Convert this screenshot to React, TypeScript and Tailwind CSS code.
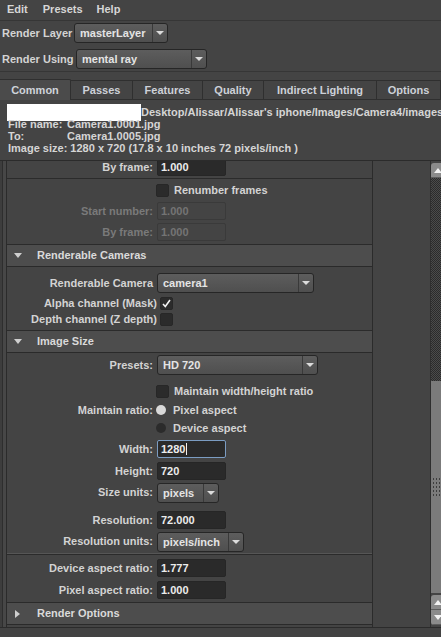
import React, { ReactNode } from 'react';

function DownTri() {
  return <span className="h-0 w-0 border-x-[4px] border-t-[4px] border-x-transparent border-t-[#dcdcdc]" />;
}

function Dropdown({ value, className = '' }: { value: string; className?: string }) {
  return (
    <div
      className={`flex h-[20px] shrink-0 rounded-[3px] border border-[#262626] bg-gradient-to-b from-[#5d5d5d] to-[#4f4f4f] ${className}`}
    >
      <div className="min-w-0 flex-1 overflow-hidden whitespace-nowrap pl-[5px] leading-[18px] text-[#e4e4e4]">
        {value}
      </div>
      <div className="flex w-[15px] shrink-0 items-center justify-center border-l border-[#393939]">
        <DownTri />
      </div>
    </div>
  );
}

type FieldKind = 'normal' | 'disabled' | 'focus';

function Field({ value, kind = 'normal' }: { value: string; kind?: FieldKind }) {
  const look =
    kind === 'disabled'
      ? 'border-[#3a3a3a] bg-[#444444] text-[#747474]'
      : kind === 'focus'
        ? 'border-[#7b9cc2] bg-[#2a2a2a] text-[#ececec]'
        : 'border-[#262626] bg-[#2a2a2a] text-[#ececec]';
  return (
    <div className={`flex h-[18px] w-[69px] shrink-0 items-center rounded-[2px] border pl-[3px] ${look}`}>
      {value}
      {kind === 'focus' && <span className="ml-px h-[12px] w-px bg-[#f0f0f0]" />}
    </div>
  );
}

function Checkbox({ checked = false }: { checked?: boolean }) {
  return (
    <span className="flex h-[13px] w-[13px] shrink-0 items-center justify-center rounded-[2px] border border-[#272727] bg-[#2b2b2b]">
      {checked && (
        <svg width="11" height="11" viewBox="0 0 11 11">
          <path d="M2 6 L4.3 8.5 L9 2" fill="none" stroke="#f2f2f2" strokeWidth="1.6" />
        </svg>
      )}
    </span>
  );
}

function Radio({ on = false }: { on?: boolean }) {
  return (
    <span
      className={`h-[10px] w-[10px] shrink-0 rounded-full ${on ? 'bg-[#d9d9d9]' : 'bg-[#2b2b2b]'}`}
    />
  );
}

function Row({
  label,
  dim = false,
  className = '',
  children,
}: {
  label: string;
  dim?: boolean;
  className?: string;
  children: ReactNode;
}) {
  return (
    <div className={`flex items-center ${className}`}>
      <span className={`w-[146px] shrink-0 whitespace-nowrap text-right ${dim ? 'text-[#7a7a7a]' : ''}`}>
        {label}
      </span>
      <div className="ml-[4px] flex items-center">{children}</div>
    </div>
  );
}

function Header({ title, open = true }: { title: string; open?: boolean }) {
  return (
    <div className="flex h-[22px] shrink-0 items-center border-b border-[#2a2a2a] bg-[#4d4d4d] text-[#dadada]">
      {open ? (
        <span className="ml-[7px] h-0 w-0 border-x-[4px] border-t-[5px] border-x-transparent border-t-[#cfcfcf]" />
      ) : (
        <span className="ml-[8px] h-0 w-0 border-y-[4px] border-l-[5px] border-y-transparent border-l-[#cfcfcf]" />
      )}
      <span className={open ? 'ml-[15px]' : 'ml-[17px]'}>{title}</span>
    </div>
  );
}

function ScrollButton({ up }: { up: boolean }) {
  return (
    <div className="flex h-[15px] shrink-0 items-center border-b border-[#5c5c5c] bg-[#8b8b8b] pl-[3px]">
      {up ? (
        <span className="h-0 w-0 border-x-[4px] border-b-[5px] border-x-transparent border-b-[#f2f2f2]" />
      ) : (
        <span className="h-0 w-0 border-x-[4px] border-t-[5px] border-x-transparent border-t-[#f2f2f2]" />
      )}
    </div>
  );
}

function Scrollbar() {
  return (
    <div className="flex w-[11px] shrink-0 flex-col border-l border-[#2e2e2e] pt-[2px]">
      <div className="rounded-tl-[3px] overflow-hidden">
        <ScrollButton up />
      </div>
      <div className="h-[203px] shrink-0 bg-[image:repeating-conic-gradient(#2b2b2b_0_25%,#4b4b4b_0_50%)] bg-[length:2px_2px]" />
      <div className="flex h-[212px] shrink-0 items-center bg-[#7b7b7b] pl-[2px]">
        <div className="grid grid-cols-3 gap-x-[2px] gap-y-[2px]">
          {Array.from({ length: 15 }).map((_, i) => (
            <span key={i} className="h-[2px] w-px bg-[#3d3d3d]" />
          ))}
        </div>
      </div>
      <div className="mt-[2px] overflow-hidden rounded-tl-[3px]">
        <ScrollButton up />
      </div>
      <div className="overflow-hidden rounded-bl-[3px]">
        <ScrollButton up={false} />
      </div>
    </div>
  );
}

const tabs = [
  { name: 'Common', w: 'w-[71px]' },
  { name: 'Passes', w: 'w-[62px]' },
  { name: 'Features', w: 'w-[70px]' },
  { name: 'Quality', w: 'w-[61px]' },
  { name: 'Indirect Lighting', w: 'w-[113px]' },
  { name: 'Options', w: 'w-[64px]' },
];

export default function App() {
  return (
    <div className="flex h-[637px] w-[441px] flex-col overflow-hidden whitespace-nowrap bg-[#444444] font-['Liberation_Sans',Arial,sans-serif] text-[11px] font-bold leading-none text-[#d3d3d3]">
      {/* Menu bar */}
      <div className="flex h-[21px] shrink-0 items-center border-b border-[#363636] pb-[2px] text-[#d6d6d6]">
        <span className="ml-[7px]">Edit</span>
        <span className="ml-[15px]">Presets</span>
        <span className="ml-[14px]">Help</span>
      </div>

      {/* Render layer / renderer */}
      <div className="flex h-[51px] shrink-0 flex-col border-b border-[#363636] pt-[2px]">
        <div className="flex h-[20px] items-center">
          <span className="w-[74px] shrink-0 pl-[2px]">Render Layer</span>
          <Dropdown value="masterLayer" className="w-[94px]" />
        </div>
        <div className="mt-[6px] flex h-[20px] items-center">
          <span className="w-[76px] shrink-0 pl-[2px]">Render Using</span>
          <Dropdown value="mental ray" className="w-[131px]" />
        </div>
      </div>

      {/* Tabs */}
      <div className="flex h-[28px] shrink-0 items-end">
        {tabs.map((t, i) =>
          i === 0 ? (
            <div
              key={t.name}
              className={`flex h-[21px] shrink-0 items-center justify-center rounded-tr-[2px] border-r border-t border-[#2f2f2f] bg-[#4b4b4b] text-[#cfd3da] ${t.w}`}
            >
              {t.name}
            </div>
          ) : (
            <div
              key={t.name}
              className={`flex h-[20px] shrink-0 items-center justify-center border-b border-r border-t border-[#2f2f2f] text-[#cdd1d8] ${t.w}`}
            >
              {t.name}
            </div>
          ),
        )}
      </div>

      {/* File info */}
      <div className="flex h-[60px] shrink-0 flex-col overflow-hidden pl-[7px] pt-[6px] text-[#d5d5d5]">
        <div className="flex h-[12px] items-center">
          <span className="h-[17px] w-[134px] shrink-0 bg-white" />
          <span>Desktop/Alissar/Alissar's iphone/Images/Camera4/images</span>
        </div>
        <div className="flex h-[12px] items-center pl-px">
          <span className="w-[59px] shrink-0">File name:</span>
          <span>Camera1.0001.jpg</span>
        </div>
        <div className="flex h-[12px] items-center pl-px">
          <span className="w-[59px] shrink-0">To:</span>
          <span>Camera1.0005.jpg</span>
        </div>
        <div className="flex h-[12px] items-center pl-px">
          <span>Image size: 1280 x 720 (17.8 x 10 inches 72 pixels/inch )</span>
        </div>
      </div>

      {/* Scroll area */}
      <div className="flex h-[468px] shrink-0 border-y border-[#2b2b2b]">
        <div className="flex w-[6px] shrink-0">
          <div className="w-[2px] bg-[#3d3d3d]" />
          <div className="w-px bg-[#2e2e2e]" />
          <div className="w-[3px] bg-[#474747]" />
        </div>

        <div className="flex w-[367px] shrink-0 flex-col border-x border-[#2b2b2b]">
          {/* scrolled-off frame range */}
          <div className="h-[18px] shrink-0 overflow-hidden border-b border-[#2b2b2b]">
            <Row label="By frame:" className="-mt-[3px] h-[18px]">
              <Field value="1.000" />
            </Row>
          </div>
          <div className="flex h-[66px] shrink-0 flex-col border-b border-[#2b2b2b] pt-[5px]">
            <div className="flex h-[13px] items-center">
              <span className="w-[149px] shrink-0" />
              <Checkbox />
              <span className="ml-[5px]">Renumber frames</span>
            </div>
            <Row label="Start number:" dim className="mt-[5px] h-[18px]">
              <Field value="1.000" kind="disabled" />
            </Row>
            <Row label="By frame:" dim className="mt-[3px] h-[18px]">
              <Field value="1.000" kind="disabled" />
            </Row>
          </div>

          <Header title="Renderable Cameras" />
          <div className="flex h-[64px] shrink-0 flex-col border-b border-[#2b2b2b] pt-[6px]">
            <Row label="Renderable Camera" className="h-[20px]">
              <Dropdown value="camera1" className="w-[157px]" />
            </Row>
            <div className="mt-[4px] flex h-[13px] items-center">
              <span className="w-[150px] shrink-0 text-right">Alpha channel (Mask)</span>
              <span className="ml-[3px]">
                <Checkbox checked />
              </span>
            </div>
            <div className="mt-[3px] flex h-[13px] items-center">
              <span className="w-[150px] shrink-0 text-right">Depth channel (Z depth)</span>
              <span className="ml-[3px]">
                <Checkbox />
              </span>
            </div>
          </div>

          <Header title="Image Size" />
          <div className="flex h-[250px] shrink-0 flex-col border-b border-[#2b2b2b] pt-[2px]">
            <Row label="Presets:" className="h-[20px]">
              <Dropdown value="HD 720" className="w-[161px]" />
            </Row>
            <div className="mt-[10px] flex h-[13px] items-center">
              <span className="w-[149px] shrink-0" />
              <Checkbox />
              <span className="ml-[5px]">Maintain width/height ratio</span>
            </div>
            <div className="mt-[5px] flex h-[14px] items-center">
              <span className="w-[146px] shrink-0 text-right">Maintain ratio:</span>
              <span className="ml-[3px] flex items-center">
                <Radio on />
                <span className="ml-[7px]">Pixel aspect</span>
              </span>
            </div>
            <div className="mt-[4px] flex h-[14px] items-center">
              <span className="w-[149px] shrink-0" />
              <Radio />
              <span className="ml-[7px]">Device aspect</span>
            </div>
            <Row label="Width:" className="mt-[5px] h-[18px]">
              <Field value="1280" kind="focus" />
            </Row>
            <Row label="Height:" className="mt-[4px] h-[18px]">
              <Field value="720" />
            </Row>
            <Row label="Size units:" className="mt-[3px] h-[19px]">
              <Dropdown value="pixels" className="h-[19px] w-[62px]" />
            </Row>
            <Row label="Resolution:" className="mt-[9px] h-[18px]">
              <Field value="72.000" />
            </Row>
            <Row label="Resolution units:" className="mt-[3px] h-[19px]">
              <Dropdown value="pixels/inch" className="h-[19px] w-[87px]" />
            </Row>
            <div className="mt-[2px] h-px bg-[#565656]" />
            <div className="h-px bg-[#2b2b2b]" />
            <Row label="Device aspect ratio:" className="mt-[4px] h-[18px]">
              <Field value="1.777" />
            </Row>
            <Row label="Pixel aspect ratio:" className="mt-[4px] h-[18px]">
              <Field value="1.000" />
            </Row>
          </div>

          <Header title="Render Options" open={false} />
        </div>

        <div className="w-[57px] shrink-0" />
        <Scrollbar />
      </div>

      <div className="h-[9px] shrink-0 bg-[#424242]" />
    </div>
  );
}
